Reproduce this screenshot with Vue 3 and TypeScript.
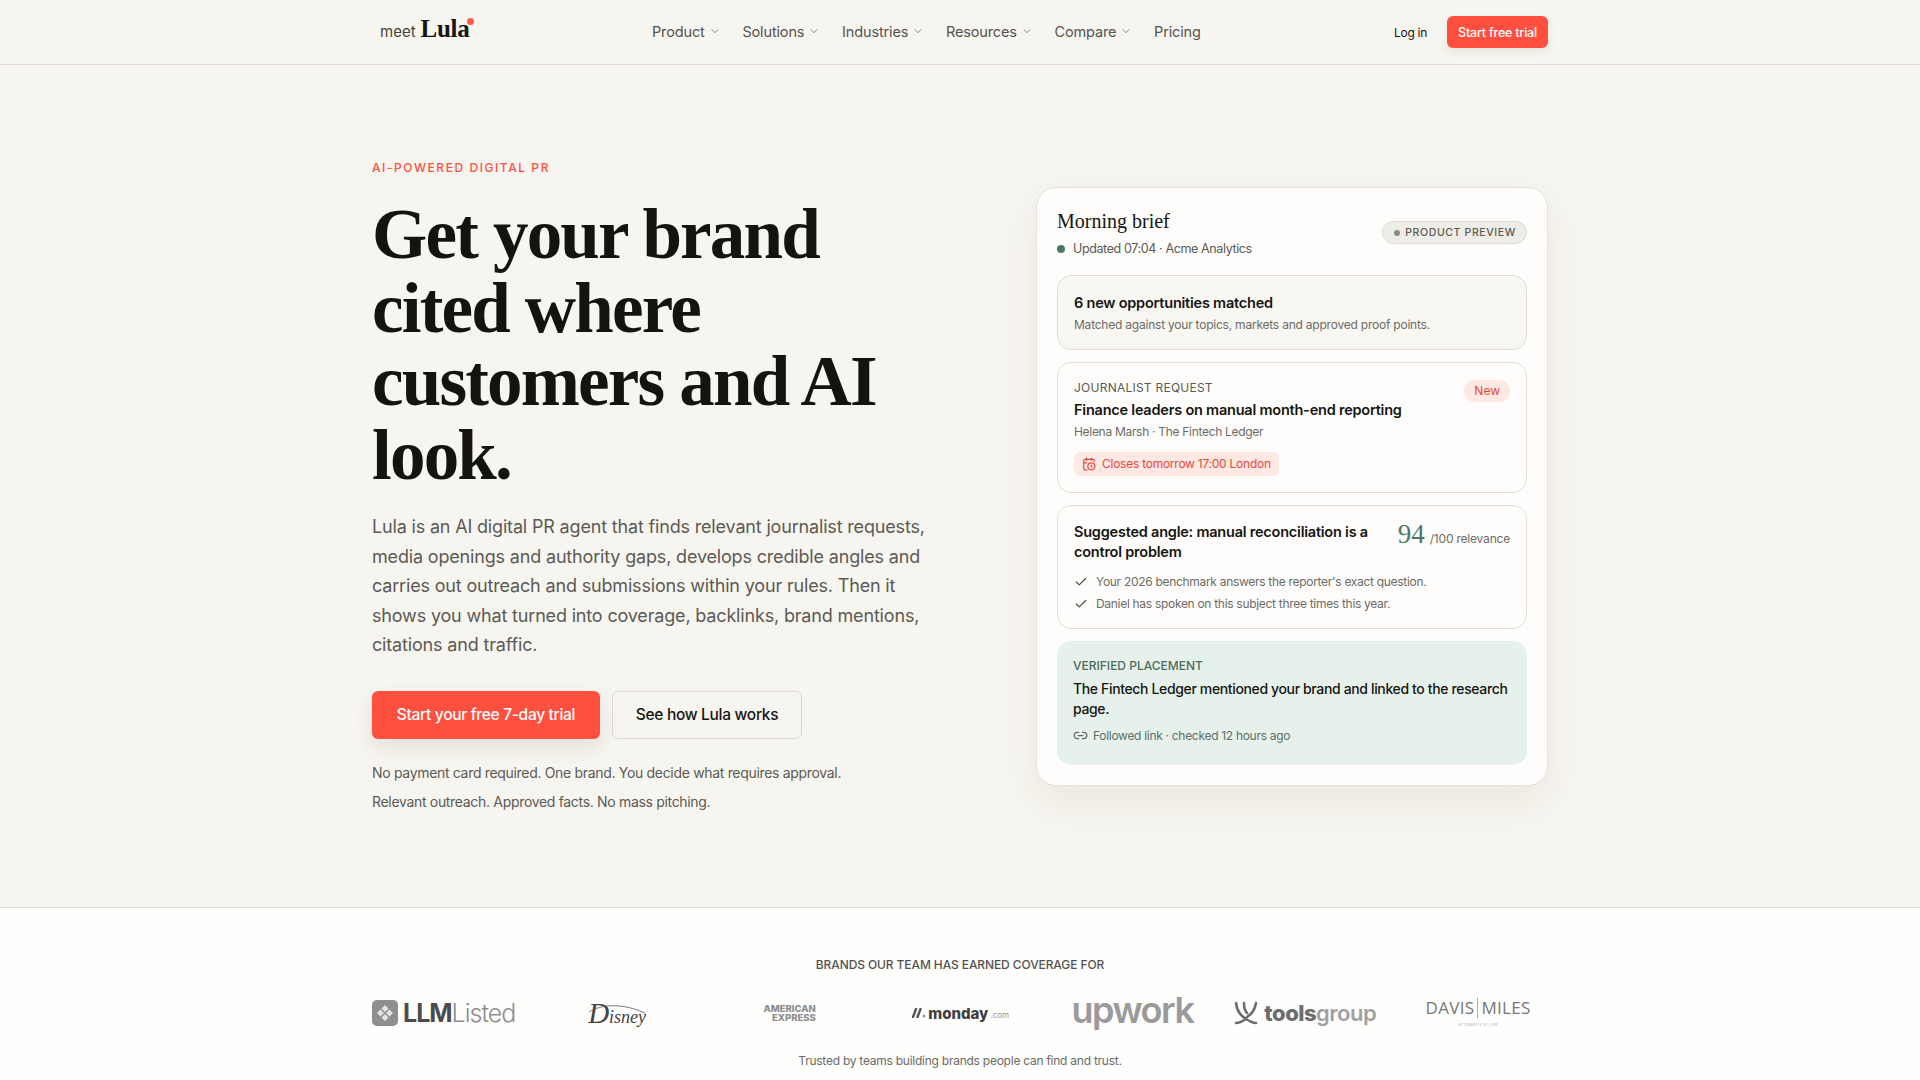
<script setup lang="ts">
const navItems = [
  { label: 'Product', menu: true },
  { label: 'Solutions', menu: true },
  { label: 'Industries', menu: true },
  { label: 'Resources', menu: true },
  { label: 'Compare', menu: true },
  { label: 'Pricing', menu: false },
]

const proofPoints = [
  "Your 2026 benchmark answers the reporter's exact question.",
  'Daniel has spoken on this subject three times this year.',
]
</script>

<template>
  <div class="page">
    <header class="topbar">
      <div class="wrap topbar-inner">
        <a class="brand">
          <span class="brand-meet">meet</span>
          <span class="brand-name">Lula<i class="brand-dot"></i></span>
        </a>
        <nav class="nav">
          <a v-for="item in navItems" :key="item.label" class="nav-link">
            {{ item.label }}
            <svg v-if="item.menu" width="10" height="10" viewBox="0 0 10 10" fill="none" stroke="currentColor" stroke-width="1" stroke-linecap="round" stroke-linejoin="round"><path d="M2 3.8 5 6.6 8 3.8" /></svg>
          </a>
        </nav>
        <div class="topbar-actions">
          <a class="login">Log in</a>
          <a class="btn-small">Start free trial</a>
        </div>
      </div>
    </header>

    <section class="hero">
      <div class="wrap hero-grid">
        <div class="hero-copy">
          <p class="eyebrow">AI-POWERED DIGITAL PR</p>
          <h1>Get your brand cited where customers and AI look.</h1>
          <p class="lede">Lula is an AI digital PR agent that finds relevant journalist requests, media openings and authority gaps, develops credible angles and carries out outreach and submissions within your rules. Then it shows you what turned into coverage, backlinks, brand mentions, citations and traffic.</p>
          <div class="cta-row">
            <a class="btn btn-primary">Start your free 7-day trial</a>
            <a class="btn btn-ghost">See how Lula works</a>
          </div>
          <p class="note first">No payment card required. One brand. You decide what requires approval.</p>
          <p class="note">Relevant outreach. Approved facts. No mass pitching.</p>
        </div>

        <aside class="brief">
          <div class="brief-head">
            <div>
              <h2>Morning brief</h2>
              <p class="updated"><i class="dot-green"></i>Updated 07:04 · Acme Analytics</p>
            </div>
            <span class="preview"><i class="dot-grey"></i>PRODUCT PREVIEW</span>
          </div>

          <div class="panel panel-soft">
            <h3>6 new opportunities matched</h3>
            <p class="meta">Matched against your topics, markets and approved proof points.</p>
          </div>

          <div class="panel request">
            <span class="tag-new">New</span>
            <p class="kicker">JOURNALIST REQUEST</p>
            <h3>Finance leaders on manual month-end reporting</h3>
            <p class="meta byline">Helena Marsh · The Fintech Ledger</p>
            <span class="deadline">
              <svg width="14" height="14" viewBox="0 0 24 24" fill="none" stroke="currentColor" stroke-width="2" stroke-linecap="round" stroke-linejoin="round"><path d="M21 7.5V6a2 2 0 0 0-2-2H5a2 2 0 0 0-2 2v14a2 2 0 0 0 2 2h3.5" /><path d="M16 2v4" /><path d="M8 2v4" /><path d="M3 10h5" /><path d="M17.5 17.5 16 16.3V14" /><circle cx="16" cy="16" r="6" /></svg>
              Closes tomorrow 17:00 London
            </span>
          </div>

          <div class="panel angle">
            <div class="angle-head">
              <h3>Suggested angle: manual reconciliation is a control problem</h3>
              <div class="score"><b>94</b><span>/100 relevance</span></div>
            </div>
            <ul class="proofs">
              <li v-for="point in proofPoints" :key="point">
                <svg width="14" height="14" viewBox="0 0 24 24" fill="none" stroke="currentColor" stroke-width="2" stroke-linecap="round" stroke-linejoin="round"><path d="M20 6 9 17l-5-5" /></svg>
                {{ point }}
              </li>
            </ul>
          </div>

          <div class="panel panel-green">
            <p class="kicker">VERIFIED PLACEMENT</p>
            <h3 class="placed">The Fintech Ledger mentioned your brand and linked to the research page.</h3>
            <p class="followed">
              <svg width="15" height="15" viewBox="0 0 24 24" fill="none" stroke="currentColor" stroke-width="2" stroke-linecap="round" stroke-linejoin="round"><path d="M9 17H7A5 5 0 0 1 7 7h2" /><path d="M15 7h2a5 5 0 1 1 0 10h-2" /><line x1="8" y1="12" x2="16" y2="12" /></svg>
              Followed link · checked 12 hours ago
            </p>
          </div>
        </aside>
      </div>
    </section>

    <section class="logos">
      <div class="wrap">
        <p class="logos-title">BRANDS OUR TEAM HAS EARNED COVERAGE FOR</p>
        <div class="logo-row">
          <div class="logo llm">
            <svg width="26" height="26" viewBox="0 0 26 26"><rect width="26" height="26" rx="5" fill="#8f8f8f" /><path d="M13 5 16.500 8.500 13 12 9.500 8.500ZM13 14 16.500 17.500 13 21 9.500 17.500ZM5 13 8.500 9.500 12 13 8.500 16.500ZM14 13 17.500 9.500 21 13 17.500 16.500Z" fill="#e4e4e4" /></svg>
            <span><b>LLM</b>Listed</span>
          </div>
          <div class="logo disney">
            <svg class="disney-arc" width="60" height="12" viewBox="0 0 60 12" fill="none" stroke="#555" stroke-width="0.800"><path d="M2 9C14 1 36 0 58 10" /></svg>
            <span><b>D</b>isney</span>
          </div>
          <div class="logo amex"><span>AMERICAN</span><span>EXPRESS</span></div>
          <div class="logo monday">
            <svg width="14" height="10" viewBox="0 0 14 10"><path d="M1 9 4 1M5.500 9 8.500 1" stroke="#555" stroke-width="2.400" stroke-linecap="round" /><circle cx="12" cy="8" r="1.500" fill="#999" /></svg>
            <b>monday</b><small>.com</small>
          </div>
          <div class="logo upwork">upwork</div>
          <div class="logo tools">
            <svg width="24" height="24" viewBox="0 0 24 24" fill="none" stroke="#6d6d6d" stroke-width="2.600" stroke-linecap="round"><path d="M2 2C3 10 7 15 12 18M22 2C21 8 18 13 13 16M10 2C10 7 11 10 13 12M2 22C6 22 9 20 12 18 15 20 18 22 22 22" /></svg>
            <span><b>tools</b>group</span>
          </div>
          <div class="logo davis">
            <span>DAVIS<i></i>MILES</span>
            <small>ATTORNEYS AT LAW</small>
          </div>
        </div>
        <p class="trusted">Trusted by teams building brands people can find and trust.</p>
      </div>
    </section>
  </div>
</template>

<style>
html,
body {
  margin: 0;
  background: #f7f5ef;
}
</style>

<style scoped>
* {
  box-sizing: border-box;
}
.page {
  font-family: Inter, "Noto Sans", sans-serif;
  color: #161511;
  background: #f7f5ef;
  height: 1080px;
  overflow: hidden;
}
.wrap {
  width: 1176px;
  margin: 0 auto;
}
p,
h1,
h2,
h3,
ul {
  margin: 0;
  padding: 0;
}
.topbar {
  height: 65px;
  border-bottom: 1px solid #dfddd6;
}
.topbar-inner {
  height: 64px;
  display: flex;
  align-items: center;
}
.brand {
  width: 280px;
  padding-left: 8px;
  display: flex;
  align-items: baseline;
  gap: 5px;
  margin-top: -6px;
}
.brand-meet {
  font-size: 15px;
  color: #45433e;
}
.brand-name {
  position: relative;
  font-family: "Liberation Serif", serif;
  font-weight: 700;
  font-size: 25px;
  letter-spacing: -0.3px;
}
.brand-dot {
  position: absolute;
  right: -5px;
  top: 3px;
  width: 7px;
  height: 7px;
  border-radius: 50%;
  background: #ff5a4d;
}
.nav {
  display: flex;
  gap: 22.700px;
  margin-top: -2px;
}
.nav-link {
  display: flex;
  align-items: center;
  gap: 5px;
  font-size: 14.500px;
  letter-spacing: -0.14px;
  color: #55534e;
}
.nav-link svg {
  color: #8b8982;
}
.topbar-actions {
  margin-left: auto;
  display: flex;
  align-items: center;
  gap: 20px;
}
.login {
  font-size: 12px;
  letter-spacing: -0.3px;
  color: #161511;
}
.btn-small {
  width: 101px;
  height: 32px;
  display: flex;
  align-items: center;
  justify-content: center;
  border-radius: 6px;
  background: #ff4f3f;
  color: #fff;
  font-size: 12.500px;
  font-weight: 500;
  letter-spacing: -0.2px;
  box-shadow: 0 4px 10px rgba(60, 40, 20, 0.08);
}
.hero {
  height: 843px;
  border-bottom: 1px solid #dcdad4;
  display: flex;
  align-items: center;
}
.hero-grid {
  display: grid;
  grid-template-columns: 568px 512px;
  gap: 96px;
  align-items: center;
}
.eyebrow {
  font-size: 12px;
  font-weight: 500;
  letter-spacing: 0.13em;
  color: #ff4f3f;
  line-height: 16px;
}
h1 {
  margin-top: 22px;
  font-family: "Liberation Serif", serif;
  font-weight: 700;
  font-size: 71px;
  line-height: 73.500px;
  letter-spacing: -1.800px;
  color: #14130f;
}
.lede {
  margin-top: 20px;
  width: 568px;
  font-size: 18px;
  letter-spacing: -0.17px;
  line-height: 29.400px;
  color: #5c5a54;
}
.cta-row {
  margin-top: 31px;
  display: flex;
  gap: 12px;
}
.btn {
  height: 48px;
  display: flex;
  align-items: center;
  justify-content: center;
  border-radius: 6px;
  font-size: 15.500px;
  font-weight: 500;
  letter-spacing: -0.3px;
}
.btn-primary {
  width: 228px;
  background: #ff4f3f;
  color: #fff;
  box-shadow: 0 8px 20px rgba(60, 40, 20, 0.1);
}
.btn-ghost {
  width: 190px;
  border: 1px solid #dcdad3;
  color: #161511;
}
.note {
  margin-top: 9px;
  font-size: 14px;
  letter-spacing: -0.32px;
  line-height: 20px;
  color: #5c5a54;
}
.note.first {
  margin-top: 24px;
}
.brief {
  width: 512px;
  padding: 20px;
  background: #fefdfb;
  border: 1px solid #e3e1da;
  border-radius: 20px;
  box-shadow: 0 16px 40px rgba(60, 50, 30, 0.07);
}
.brief-head {
  display: flex;
  justify-content: space-between;
  align-items: center;
  margin-bottom: 17px;
}
h2 {
  font-family: "Liberation Serif", serif;
  font-weight: 400;
  font-size: 20px;
  line-height: 26px;
  color: #161511;
}
.updated {
  margin-top: 6px;
  display: flex;
  align-items: center;
  font-size: 12.500px;
  letter-spacing: -0.38px;
  line-height: 18px;
  color: #5c5a54;
}
.dot-green {
  width: 8px;
  height: 8px;
  margin-right: 8px;
  border-radius: 50%;
  background: #4d7765;
}
.preview {
  height: 23px;
  padding: 0 10px 0 11px;
  display: flex;
  align-items: center;
  gap: 5px;
  border: 1px solid #dcdad3;
  border-radius: 12px;
  background: #eeece6;
  font-size: 10.500px;
  font-weight: 500;
  letter-spacing: 0.06em;
  color: #5c5a54;
}
.dot-grey {
  width: 6px;
  height: 6px;
  border-radius: 50%;
  background: #8b8982;
}
.panel {
  position: relative;
  margin-top: 12px;
  padding: 16px;
  border: 1px solid #e0ded7;
  border-radius: 14px;
}
.panel-soft {
  padding: 17px 16px 15px;
  background: #f9f7f2;
}
h3 {
  font-size: 14.500px;
  font-weight: 600;
  letter-spacing: -0.22px;
  line-height: 20px;
  color: #161511;
}
.meta {
  margin-top: 3px;
  font-size: 12px;
  letter-spacing: -0.22px;
  line-height: 18px;
  color: #6d6b65;
}
.byline {
  letter-spacing: -0.3px;
}
.kicker {
  font-size: 12px;
  line-height: 18px;
  letter-spacing: 0.02em;
  color: #5c5a54;
  margin-bottom: 3px;
}
.tag-new {
  position: absolute;
  top: 17px;
  right: 16px;
  height: 22px;
  padding: 0 10px;
  display: flex;
  align-items: center;
  border-radius: 11px;
  background: #fde8e4;
  color: #e8483a;
  font-size: 12px;
}
.deadline {
  margin-top: 11px;
  height: 24px;
  padding: 0 8px;
  display: inline-flex;
  align-items: center;
  gap: 6px;
  border-radius: 6px;
  background: #fde8e4;
  color: #e8483a;
  font-size: 12px;
  letter-spacing: -0.25px;
}
.angle {
  padding-bottom: 13px;
}
.angle-head {
  display: flex;
  justify-content: space-between;
  gap: 16px;
}
.score {
  flex: none;
  display: flex;
  align-items: baseline;
  gap: 5px;
}
.score b {
  font-family: "Liberation Serif", serif;
  font-weight: 400;
  font-size: 27px;
  line-height: 24px;
  color: #4d7765;
}
.score span {
  font-size: 12px;
  letter-spacing: -0.2px;
  color: #6d6b65;
}
.proofs {
  list-style: none;
  margin-top: 9px;
}
.proofs li {
  display: flex;
  align-items: center;
  gap: 8px;
  height: 22px;
  font-size: 12px;
  letter-spacing: -0.3px;
  color: #6d6b65;
}
.proofs svg {
  color: #4a4a44;
}
.panel-green {
  border: none;
  background: #e6f1eb;
  padding: 16px 16px 20px;
}
.panel-green .kicker {
  color: #4d6b5e;
  font-weight: 500;
  letter-spacing: 0;
  margin-bottom: 4px;
}
.placed {
  font-size: 14px;
  font-weight: 500;
  letter-spacing: -0.36px;
}
.followed {
  margin-top: 8px;
  display: flex;
  align-items: center;
  gap: 5px;
  font-size: 12px;
  letter-spacing: -0.3px;
  line-height: 18px;
  color: #5f6f68;
}
.logos {
  height: 172px;
  background: #fefefd;
  padding-top: 48px;
}
.logos-title {
  text-align: center;
  font-size: 12px;
  font-weight: 500;
  line-height: 18px;
  letter-spacing: -0.1px;
  color: #55534e;
}
.logo-row {
  margin-top: 14px;
  height: 44px;
  display: grid;
  grid-template-columns: repeat(7, 1fr);
  gap: 32px;
  align-items: center;
}
.logo {
  display: flex;
  align-items: center;
  justify-content: center;
  color: #777;
  white-space: nowrap;
}
.llm {
  gap: 5px;
  font-size: 25px;
  font-weight: 300;
  color: #8e8e8e;
  letter-spacing: -1px;
}
.llm b {
  font-weight: 700;
  color: #4b4b4b;
}
.disney {
  position: relative;
  font-family: "Liberation Serif", serif;
  font-style: italic;
  font-size: 18px;
  color: #444;
}
.disney b {
  font-weight: 400;
  font-size: 29px;
}
.disney-arc {
  position: absolute;
  left: 40px;
  top: 6px;
}
.amex {
  flex-direction: column;
  font-size: 9.500px;
  line-height: 9px;
  font-weight: 800;
  color: #8c8c8c;
  align-items: flex-end;
  width: 54px;
  justify-self: center;
}
.monday {
  gap: 2px;
  font-size: 15px;
  color: #3f3f3f;
}
.monday b {
  font-weight: 800;
}
.monday small {
  font-size: 8px;
  color: #999;
  margin-top: 4px;
}
.upwork {
  font-size: 36px;
  font-weight: 600;
  color: #9a9a9a;
  letter-spacing: -1.500px;
  padding-bottom: 6px;
}
.tools {
  gap: 6px;
  font-size: 22px;
  color: #a0a0a0;
  letter-spacing: -0.5px;
}
.tools span {
  font-weight: 600;
}
.tools b {
  font-weight: 800;
  color: #6d6d6d;
}
.davis {
  flex-direction: column;
  gap: 5px;
  padding-bottom: 2px;
}
.davis span {
  display: flex;
  align-items: center;
  font-family: "Open Sans", sans-serif;
  font-size: 17px;
  line-height: 18px;
  color: #777;
  letter-spacing: 0.3px;
}
.davis i {
  width: 1px;
  height: 20px;
  margin: 0 3px;
  background: #aaa;
}
.davis small {
  font-size: 3.500px;
  line-height: 4px;
  letter-spacing: 0.3px;
  color: #aaa;
}
.trusted {
  margin-top: 20px;
  text-align: center;
  font-size: 12px;
  letter-spacing: -0.25px;
  line-height: 18px;
  color: #6d6b65;
}
</style>
